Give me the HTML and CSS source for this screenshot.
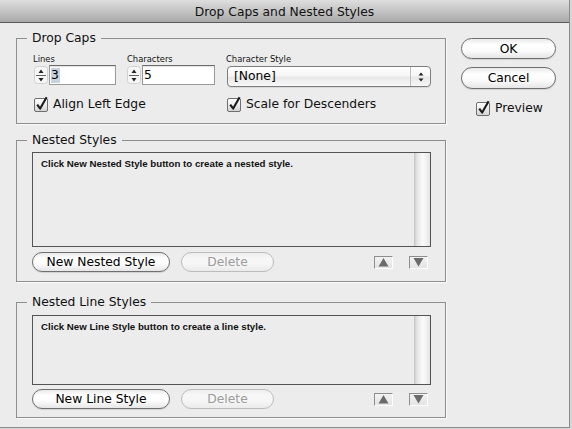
FILE: index.html
```html
<!DOCTYPE html>
<html>
<head>
<meta charset="utf-8">
<title>Drop Caps and Nested Styles</title>
<link rel="stylesheet" href="styles.css">
</head>
<body>
<svg class="defs" width="0" height="0" aria-hidden="true">
  <defs>
    <linearGradient id="cbg" x1="0" y1="0" x2="0" y2="1">
      <stop offset="0" stop-color="#ffffff"/>
      <stop offset="0.5" stop-color="#ececec"/>
      <stop offset="1" stop-color="#d2d2d2"/>
    </linearGradient>
  </defs>
</svg>
<div class="window">
  <div class="titlebar">Drop Caps and Nested Styles</div>
  <div class="content">
    <div class="main">
      <fieldset class="group dropcaps">
        <legend>Drop Caps</legend>
        <div class="dc-fields">
          <div class="field f-lines">
            <div class="flabel">Lines</div>
            <div class="numinput">
              <svg class="spin" width="14" height="20" viewBox="0 0 14 20"><rect x="0.5" y="1.5" width="13" height="17" rx="3" fill="#f6f6f6" stroke="#d0d0d0"/><path d="M4.5 8 L7 4.5 L9.5 8Z" fill="#222"/><line x1="2" y1="10.5" x2="12" y2="10.5" stroke="#666"/><path d="M4.5 13 L7 16.5 L9.5 13Z" fill="#222"/></svg>
              <div class="tfield w-lines"><span class="hl">3</span></div>
            </div>
          </div>
          <div class="field f-chars">
            <div class="flabel">Characters</div>
            <div class="numinput">
              <svg class="spin" width="14" height="20" viewBox="0 0 14 20"><rect x="0.5" y="1.5" width="13" height="17" rx="3" fill="#f6f6f6" stroke="#d0d0d0"/><path d="M4.5 8 L7 4.5 L9.5 8Z" fill="#222"/><line x1="2" y1="10.5" x2="12" y2="10.5" stroke="#666"/><path d="M4.5 13 L7 16.5 L9.5 13Z" fill="#222"/></svg>
              <div class="tfield w-chars">5</div>
            </div>
          </div>
          <div class="field f-style">
            <div class="flabel">Character Style</div>
            <div class="select">
              <span class="select-val">[None]</span>
              <span class="stepper"><svg width="8" height="12" viewBox="0 0 8 12"><path d="M1.5 4.5 L4 1.5 L6.5 4.5Z" fill="#222"/><path d="M1.5 7.5 L4 10.5 L6.5 7.5Z" fill="#222"/></svg></span>
            </div>
          </div>
        </div>
        <div class="dc-checks">
          <div class="check c-align">
            <svg class="cb" width="16" height="16" viewBox="0 0 16 16"><rect x="0.5" y="2.5" width="13" height="13" rx="1.5" fill="url(#cbg)" stroke="#6f6f6f"/><path d="M3.2 8.6 L6.2 12.6 L12.6 1.2" fill="none" stroke="#1c1c1c" stroke-width="2.1" stroke-linejoin="round"/></svg>
            <span>Align Left Edge</span>
          </div>
          <div class="check c-scale">
            <svg class="cb" width="16" height="16" viewBox="0 0 16 16"><rect x="0.5" y="2.5" width="13" height="13" rx="1.5" fill="url(#cbg)" stroke="#6f6f6f"/><path d="M3.2 8.6 L6.2 12.6 L12.6 1.2" fill="none" stroke="#1c1c1c" stroke-width="2.1" stroke-linejoin="round"/></svg>
            <span>Scale for Descenders</span>
          </div>
        </div>
      </fieldset>

      <fieldset class="group nested">
        <legend>Nested Styles</legend>
        <div class="listbox lb-nested">
          <div class="lb-text">Click New Nested Style button to create a nested style.</div>
          <div class="scrollbar"></div>
        </div>
        <div class="btnrow">
          <button class="pill wide">New Nested Style</button>
          <button class="pill del" disabled>Delete</button>
          <div class="arrows">
            <span class="arrowbtn"><svg width="19" height="13" viewBox="0 0 19 13"><path d="M4.5 10.5 L9.5 2 L14.5 10.5Z" fill="#6b6b6b"/></svg></span>
            <span class="arrowbtn"><svg width="19" height="13" viewBox="0 0 19 13"><path d="M4.5 2 L9.5 10.5 L14.5 2Z" fill="#6b6b6b"/></svg></span>
          </div>
        </div>
      </fieldset>

      <fieldset class="group linestyles">
        <legend>Nested Line Styles</legend>
        <div class="listbox lb-line">
          <div class="lb-text">Click New Line Style button to create a line style.</div>
          <div class="scrollbar"></div>
        </div>
        <div class="btnrow">
          <button class="pill wide">New Line Style</button>
          <button class="pill del" disabled>Delete</button>
          <div class="arrows">
            <span class="arrowbtn"><svg width="19" height="13" viewBox="0 0 19 13"><path d="M4.5 10.5 L9.5 2 L14.5 10.5Z" fill="#6b6b6b"/></svg></span>
            <span class="arrowbtn"><svg width="19" height="13" viewBox="0 0 19 13"><path d="M4.5 2 L9.5 10.5 L14.5 2Z" fill="#6b6b6b"/></svg></span>
          </div>
        </div>
      </fieldset>
    </div>

    <div class="side">
      <button class="pill side-btn">OK</button>
      <button class="pill side-btn cancel">Cancel</button>
      <div class="check c-preview">
        <svg class="cb" width="16" height="16" viewBox="0 0 16 16"><rect x="0.5" y="2.5" width="13" height="13" rx="1.5" fill="url(#cbg)" stroke="#6f6f6f"/><path d="M3.2 8.6 L6.2 12.6 L12.6 1.2" fill="none" stroke="#1c1c1c" stroke-width="2.1" stroke-linejoin="round"/></svg>
        <span>Preview</span>
      </div>
    </div>
  </div>
</div>
</body>
</html>
```

FILE: styles.css
```css
* { box-sizing: border-box; }
html, body { margin: 0; padding: 0; }
body {
  width: 572px;
  height: 429px;
  overflow: hidden;
  background: #d6d6d6;
  font-family: "DejaVu Sans", "Liberation Sans", sans-serif;
  color: #111;
}
.defs { display: block; width: 0; height: 0; overflow: hidden; }

.window {
  width: 570px;
  height: 428px;
  background: #ececec;
  border-right: 1px solid #8c8c8c;
  border-bottom: 1px solid #8c8c8c;
  display: flex;
  flex-direction: column;
}
.titlebar {
  flex: none;
  height: 23px;
  background: linear-gradient(#dedede, #c4c4c4 50%, #a9a9a9);
  border-bottom: 1px solid #595959;
  text-align: center;
  font-size: 12.3px;
  line-height: 24px;
  color: #111;
}
.content {
  display: flex;
  padding-left: 16px;
}
.main {
  width: 430px;
  display: flex;
  flex-direction: column;
}

fieldset.group {
  margin: 0;
  padding: 0;
  min-width: 0;
  border: 1px solid #8e8e8e;
  box-shadow: 1px 1px 0 #fafafa;
}
legend {
  margin-left: 10px;
  padding: 0 5px;
  font-size: 12.3px;
  line-height: 16px;
  color: #111;
}

/* Drop caps */
.dropcaps { margin-top: 7px !important; padding-bottom: 10px !important; }
.dc-fields {
  display: flex;
  padding-left: 16px;
  margin-top: 7px;
}
.flabel {
  font-size: 8.4px;
  line-height: 12px;
  height: 12px;
  color: #111;
}
.f-lines { width: 94px; }
.f-chars { width: 99px; }
.f-style { width: 205px; }
.numinput { display: flex; align-items: center; height: 20px; }
.spin { flex: none; display: block; }
.f-lines .spin { margin-left: 1px; }
.tfield {
  height: 20px;
  margin-left: 1px;
  background: #fff;
  border: 1px solid #9a9a9a;
  border-top-color: #6c6c6c;
  box-shadow: inset 0 1px 1px rgba(0,0,0,0.12);
  font-size: 12.3px;
  line-height: 18px;
  padding-left: 1px;
  color: #000;
}
.w-lines { width: 67px; }
.w-chars { width: 73px; }
.hl { background: #c9d3df; padding: 0 1px 1px 0; }
.select {
  margin-left: 1px;
  margin-top: 1px;
  width: 204px;
  height: 21px;
  display: flex;
  align-items: stretch;
  border: 1px solid #7d7d7d;
  border-radius: 4px;
  background: linear-gradient(#ffffff, #f6f6f6 45%, #e8e8e8 55%, #f8f8f8);
  box-shadow: 0 1px 0 rgba(0,0,0,0.08);
}
.select-val {
  flex: 1;
  font-size: 12.3px;
  line-height: 19px;
  padding-left: 6px;
  color: #000;
}
.stepper {
  width: 20px;
  display: flex;
  align-items: center;
  justify-content: center;
  border-left: 1px solid #bdbdbd;
}
.stepper svg { display: block; }

.dc-checks {
  display: flex;
  margin-top: 8px;
  padding-left: 16px;
}
.check {
  display: flex;
  align-items: center;
  font-size: 12.3px;
  line-height: 18px;
  height: 18px;
  color: #111;
}
.cb { display: block; flex: none; margin-right: 3px; }
.c-align { width: 193px; margin-left: 1px; }
.c-scale { margin-left: 0; }

/* Nested groups */
.nested { margin-top: 8px !important; padding-bottom: 9px !important; }
.linestyles { margin-top: 12px !important; padding-bottom: 8px !important; }
.listbox {
  margin: 4px 0 0 15px;
  width: 399px;
  display: flex;
  border: 1px solid #555;
  background: #ececec;
}
.lb-nested { height: 95px; }
.lb-line { height: 70px; margin-top: 5px; }
.lb-text {
  flex: 1;
  font-family: "Liberation Sans", "DejaVu Sans", sans-serif;
  font-size: 9.7px;
  font-weight: bold;
  line-height: 11px;
  padding: 5px 0 0 8px;
  color: #111;
}
.scrollbar {
  width: 16px;
  flex: none;
  background: linear-gradient(90deg, #c4c4c4, #e6e6e6 20%, #fbfbfb 55%, #f0f0f0 80%, #e4e4e4);
}
.btnrow {
  display: flex;
  align-items: center;
  height: 20px;
  margin: 5px 0 0 15px;
  width: 399px;
}
.linestyles .btnrow { margin-top: 4px; }

.pill {
  height: 20px;
  padding: 0;
  border: 1px solid #6f6f6f;
  border-radius: 11px;
  background: linear-gradient(#e9e9e9, #ffffff 30%, #fcfcfc 60%, #e6e6e6);
  box-shadow: 0 1px 1px rgba(0,0,0,0.12);
  font-family: "DejaVu Sans", "Liberation Sans", sans-serif;
  font-size: 12.3px;
  line-height: 18px;
  color: #000;
  text-align: center;
}
.wide { width: 138px; }
.del {
  width: 93px;
  margin-left: 11px;
  border-color: #bcbcbc;
  background: linear-gradient(#ededed, #f7f7f7 30%, #f6f6f6 60%, #ebebeb);
  box-shadow: none;
  color: #9c9c9c;
}
.arrows {
  display: flex;
  gap: 16px;
  margin-left: auto;
  margin-right: 3px;
}
.arrowbtn {
  display: block;
  width: 19px;
  height: 13px;
  background: linear-gradient(#f2f2f2, #e4e4e4);
  border-top: 1px solid #8e8e8e;
  border-left: 1px solid #8e8e8e;
  border-right: 1px solid #ffffff;
  border-bottom: 1px solid #ffffff;
  overflow: hidden;
}
.arrowbtn svg { display: block; margin: -1px 0 0 -1px; }

/* Side buttons */
.side {
  width: 95px;
  margin-left: 15px;
  padding-top: 15px;
  display: flex;
  flex-direction: column;
}
.side-btn { width: 95px; height: 21px; }
.cancel { margin-top: 8px; height: 22px; }
.c-preview { margin-top: 10px; margin-left: 15px; }
```
